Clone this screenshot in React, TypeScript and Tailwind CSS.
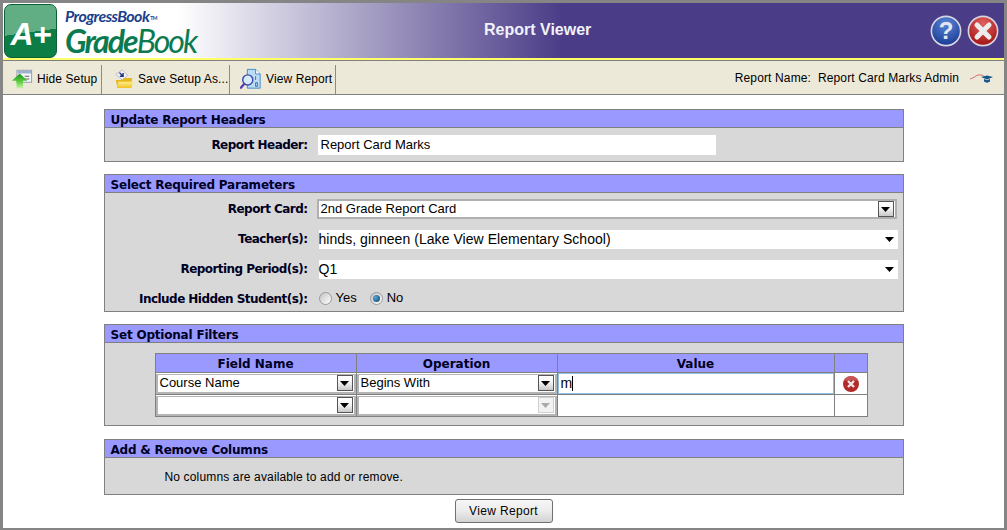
import type { ReactNode } from "react";

const sans = "font-['Liberation_Sans',Arial,sans-serif]";
const heading = "font-['DejaVu_Sans',Verdana,sans-serif] font-bold text-[12px] text-[#000022]";

const Arrow = ({ disabled }: { disabled?: boolean }) => (
  <svg width="9" height="5" viewBox="0 0 9 5" className={disabled ? "text-[#aaaaaa]" : "text-black"}>
    <path d="M0 0h9L4.5 5z" fill="currentColor" />
  </svg>
);

const DropButton = ({ disabled }: { disabled?: boolean }) => (
  <div
    className={`flex h-[16px] w-[16px] shrink-0 items-center justify-center border ${
      disabled ? "border-[#d0d0d0] bg-[#f2f2f2]" : "border-[#555555] bg-[linear-gradient(#ffffff,#f4f4f4_45%,#c8c8c8)]"
    }`}
  >
    <Arrow disabled={disabled} />
  </div>
);

const Section = ({ title, children }: { title: string; children: ReactNode }) => (
  <section className="w-[800px] border border-[#808080] bg-[#d8d8d8]">
    <h2 className={`flex h-[18px] items-center border-b border-[#808080] bg-[#9999ff] pt-[2px] pl-[6px] tracking-[-0.2px] ${heading}`}>{title}</h2>
    {children}
  </section>
);

const Label = ({ children }: { children: ReactNode }) => (
  <div className={`w-[203px] shrink-0 text-right tracking-[-0.55px] ${heading}`}>{children}</div>
);

const FormRow = ({ label, children }: { label: string; children: ReactNode }) => (
  <div className="flex h-[20px] items-center">
    <Label>{label}</Label>
    {children}
  </div>
);

const Radio = ({ checked }: { checked?: boolean }) => (
  <span className="flex h-[13px] w-[13px] items-center justify-center rounded-full border border-[#9a9a9a] bg-[linear-gradient(135deg,#c4c4c4,#ffffff)]">
    {checked && <span className="h-[7px] w-[7px] rounded-full bg-[radial-gradient(circle_at_35%_35%,#5aa6d8,#0f3f66)]" />}
  </span>
);

const GridSelect = ({ value, disabled }: { value?: string; disabled?: boolean }) => (
  <div className="flex h-[20px] items-center border-2 border-t border-[#b4b4b4] bg-white pr-px pl-[2px]">
    <span className="grow">{value}</span>
    <DropButton disabled={disabled} />
  </div>
);

const HideSetupIcon = () => (
  <svg width="22" height="22" viewBox="0 0 24 24">
    <rect x="6.5" y="2.5" width="16" height="13" fill="#f4f6fa" stroke="#8d97a8" />
    <rect x="7" y="3" width="15" height="3" fill="#9fb3cf" />
    <path d="M15 9h5M15 12h5" stroke="#555" />
    <path d="M1 14 9.5 6l8.5 8h-5v8H6v-8z" fill="url(#hideArrow)" />
    <defs>
      <linearGradient id="hideArrow" x1="0" y1="0" x2="0" y2="1">
        <stop offset="0" stopColor="#1f8f1f" />
        <stop offset="0.55" stopColor="#57cf3a" />
        <stop offset="1" stopColor="#c6f2a8" />
      </linearGradient>
    </defs>
  </svg>
);

const SaveIcon = () => (
  <svg width="20" height="22" viewBox="0 0 22 24">
    <path d="M2 7 9 2l6 6-6 5z" fill="#eef1f8" stroke="#9aa3b8" strokeWidth="0.7" />
    <path d="M6 5l4 4M10 5.500V9H6.500" stroke="#24307a" strokeWidth="1.5" fill="none" />
    <path d="M2 13h7l2-2h9l-1 11H4z" fill="#e8b820" />
    <path d="M5 15h16l-2 7H3z" fill="url(#folder)" />
    <defs>
      <linearGradient id="folder" x1="0" y1="0" x2="0" y2="1">
        <stop offset="0" stopColor="#fff08a" />
        <stop offset="1" stopColor="#f2c020" />
      </linearGradient>
    </defs>
  </svg>
);

const ViewIcon = () => (
  <svg width="22" height="24" viewBox="0 0 24 24">
    <path d="M8 1.500h9l5 5v15.500H8z" fill="#bcdcf6" stroke="#3f86c4" />
    <path d="M17 1.500V6.500h5" fill="#ffffff" stroke="#3f86c4" />
    <path d="M17 9v4M17 16h2v4h-2z" stroke="#2d6da8" fill="none" />
    <circle cx="8.500" cy="13" r="5.500" fill="#d8eafa" stroke="#3a4fa8" strokeWidth="1.6" />
    <path d="M4.500 17.500 1 21.500" stroke="#5a3fb0" strokeWidth="2.6" strokeLinecap="round" />
  </svg>
);

const RoundIcon = ({ id, from, to, children }: { id: string; from: string; to: string; children: ReactNode }) => (
  <svg width="32" height="32" viewBox="0 0 32 32">
    <defs>
      <radialGradient id={id} cx="0.5" cy="0.25" r="0.85">
        <stop offset="0" stopColor={from} />
        <stop offset="1" stopColor={to} />
      </radialGradient>
    </defs>
    <circle cx="16" cy="16" r="14.600" fill={`url(#${id})`} stroke="#d6d6e2" strokeWidth="1.6" />
    {children}
  </svg>
);

const GradCap = () => (
  <svg width="24" height="12" viewBox="0 0 24 12">
    <path d="M0 7C4 6 7 2 11 3s3 2 5 2" fill="none" stroke="#d8646a" />
    <path d="M11 5l6-1.500L23 5l-6 2.500z" fill="#14568c" />
    <path d="M14 7v2.500c2 1.500 4 1.500 6 0V7l-3 1.200z" fill="#14568c" />
  </svg>
);

const DeleteIcon = () => (
  <svg width="16" height="16" viewBox="0 0 16 16">
    <circle cx="8" cy="8" r="8" fill="#b02a2a" />
    <path d="M8 0a8 8 0 0 1 7 4.500H1A8 8 0 0 1 8 0z" fill="#cf6a6a" opacity="0.7" />
    <path d="M5 5l6 6M11 5l-6 6" stroke="#f4e6e6" strokeWidth="2.4" />
  </svg>
);

const Logo = () => (
  <div className="flex h-full items-center">
    <div className="ml-px flex h-[54px] w-[53px] items-center justify-center rounded-[7px] border border-[#0a5f35] bg-[linear-gradient(172deg,#62ae84_52%,#0b7d45_52%)] pt-[6px]">
      <span className="font-['Liberation_Sans',Arial,sans-serif] text-[32px] font-bold italic tracking-[-1px] text-white">A+</span>
    </div>
    <div className="ml-[8px] flex flex-col pt-[3px] font-['Lato','Open_Sans',sans-serif] italic">
      <span className="h-[18px] text-[16px] leading-[18px] font-bold tracking-[-0.6px] text-[#1b3f8b]">
        ProgressBook<sup className="ml-px text-[5px] not-italic">TM</sup>
      </span>
      <span className="h-[32px] text-[32px] leading-[32px] tracking-[-2px] text-[#0c7a50]">
        <span className="font-bold">Grade</span>Book
      </span>
    </div>
  </div>
);

const ToolButton = ({ width, pad, icon, label }: { width: string; pad: string; icon: ReactNode; label: string }) => (
  <button className={`flex h-[29px] items-center gap-[4px] self-end border-r border-[#8c8c84] pb-[2px] tracking-[0.1px] ${width} ${pad}`}>
    {icon}
    <span>{label}</span>
  </button>
);

export default function App() {
  return (
    <div className={`flex h-[530px] w-[1007px] flex-col border-[3px] border-b-2 border-[#858585] bg-white text-[12px] text-black ${sans}`}>
      <header className="relative flex h-[55px] shrink-0 items-center justify-between bg-[linear-gradient(90deg,#ffffff_0,#ffffff_175px,#4a3c87_560px)] pr-[5px]">
        <Logo />
        <h1 className="absolute top-[17px] left-[481px] text-[16px] leading-[20px] font-bold text-[#f2f2fa]">Report Viewer</h1>
        <div className="flex items-center gap-[5px]">
          <RoundIcon id="helpBall" from="#5a86d8" to="#12318a">
            <text x="16" y="24" textAnchor="middle" fontSize="24" fontWeight="bold" fontFamily="Liberation Sans" fill="#e6e6ee">?</text>
          </RoundIcon>
          <RoundIcon id="closeBall" from="#e26060" to="#9c0808">
            <path d="M10 10l12 12M22 10 10 22" stroke="#ececec" strokeWidth="5" strokeLinecap="round" />
          </RoundIcon>
        </div>
      </header>
      <div className="h-[3px] shrink-0 border-b border-[#808080] bg-[#ffff66]" />

      <nav className="flex h-[34px] shrink-0 items-stretch border-b border-[#808080] bg-[#ece9d8]">
        <ToolButton width="w-[99px]" pad="pl-[8px]" icon={<HideSetupIcon />} label="Hide Setup" />
        <ToolButton width="w-[128px]" pad="pl-[12px]" icon={<SaveIcon />} label="Save Setup As..." />
        <ToolButton width="w-[106px]" pad="pl-[10px]" icon={<ViewIcon />} label="View Report" />
        <div className="ml-auto flex items-center pt-px pr-[10px]">
          <span className="whitespace-pre tracking-[0.13px]">Report Name:  Report Card Marks Admin</span>
          <span className="ml-[11px] flex"><GradCap /></span>
        </div>
      </nav>

      <main className="flex grow flex-col items-center pt-[14px]">
        <Section title="Update Report Headers">
          <div className="flex h-[33px] items-start pt-[7px]">
            <FormRow label="Report Header:">
              <div className="ml-[10px] flex h-[20px] w-[398px] items-center bg-white pl-[3px] text-[13px]">Report Card Marks</div>
            </FormRow>
          </div>
        </Section>

        <div className="mt-[12px]">
          <Section title="Select Required Parameters">
            <div className="flex h-[118px] flex-col gap-[10px] pt-[6px]">
              <FormRow label="Report Card:">
                <div className="ml-[9px] flex h-[20px] w-[580px] items-center border-2 border-[#b0b0b0] bg-white pr-px pl-[2px] text-[13px]">
                  <span className="grow">2nd Grade Report Card</span>
                  <DropButton />
                </div>
              </FormRow>
              <FormRow label="Teacher(s):">
                <div className="ml-[11px] flex h-[19px] w-[579px] items-center justify-between bg-white pr-[4px] text-[14px] tracking-[0.05px]">
                  <span>hinds, ginneen (Lake View Elementary School)</span>
                  <Arrow />
                </div>
              </FormRow>
              <FormRow label="Reporting Period(s):">
                <div className="ml-[11px] flex h-[19px] w-[579px] items-center justify-between bg-white pr-[4px] text-[14px]">
                  <span>Q1</span>
                  <Arrow />
                </div>
              </FormRow>
              <FormRow label="Include Hidden Student(s):">
                <div className="mb-[2px] ml-[11px] flex items-center text-[13px]">
                  <Radio />
                  <span className="mr-[13px] ml-[4px]">Yes</span>
                  <Radio checked />
                  <span className="ml-[4px]">No</span>
                </div>
              </FormRow>
            </div>
          </Section>
        </div>

        <div className="mt-[12px]">
          <Section title="Set Optional Filters">
            <div className="h-[82px] pt-[10px] pl-[50px] text-[13px]">
              <table className="w-[713px] table-fixed border-collapse">
                <thead>
                  <tr className={`h-[18px] bg-[#9999ff] leading-[16px] ${heading}`}>
                    <th className="w-[201px] border border-[#808080] p-0 pt-[2px]">Field Name</th>
                    <th className="w-[201px] border border-[#808080] p-0 pt-[2px]">Operation</th>
                    <th className="w-[277px] border border-[#808080] p-0 pt-[2px]">Value</th>
                    <th className="border border-[#808080] p-0" />
                  </tr>
                </thead>
                <tbody>
                  <tr className="h-[22px] bg-white">
                    <td className="border border-[#808080] p-0"><GridSelect value="Course Name" /></td>
                    <td className="border border-[#808080] p-0"><GridSelect value="Begins With" /></td>
                    <td className="border border-[#808080] p-0">
                      <div className="flex h-[21px] items-center border border-[#8fc0e0] pl-[2px] text-[14px]">
                        <span>m</span>
                        <span className="h-[15px] w-px bg-black" />
                      </div>
                    </td>
                    <td className="border border-[#808080] p-0"><div className="flex justify-center"><DeleteIcon /></div></td>
                  </tr>
                  <tr className="h-[22px] bg-white">
                    <td className="border border-[#808080] p-0"><GridSelect /></td>
                    <td className="border border-[#808080] p-0"><GridSelect disabled /></td>
                    <td className="border border-[#808080] p-0" />
                    <td className="border border-[#808080] p-0" />
                  </tr>
                </tbody>
              </table>
            </div>
          </Section>
        </div>

        <div className="mt-[13px]">
          <Section title="Add & Remove Columns">
            <div className="flex h-[36px] items-center pt-px pl-[60px] tracking-[0.15px]">No columns are available to add or remove.</div>
          </Section>
        </div>

        <button className="mt-[4px] h-[24px] w-[98px] rounded-[3px] border border-[#707070] bg-[linear-gradient(#f6f6f6,#ececec_50%,#d2d2d2)] tracking-[0.35px]">
          View Report
        </button>
      </main>
    </div>
  );
}
